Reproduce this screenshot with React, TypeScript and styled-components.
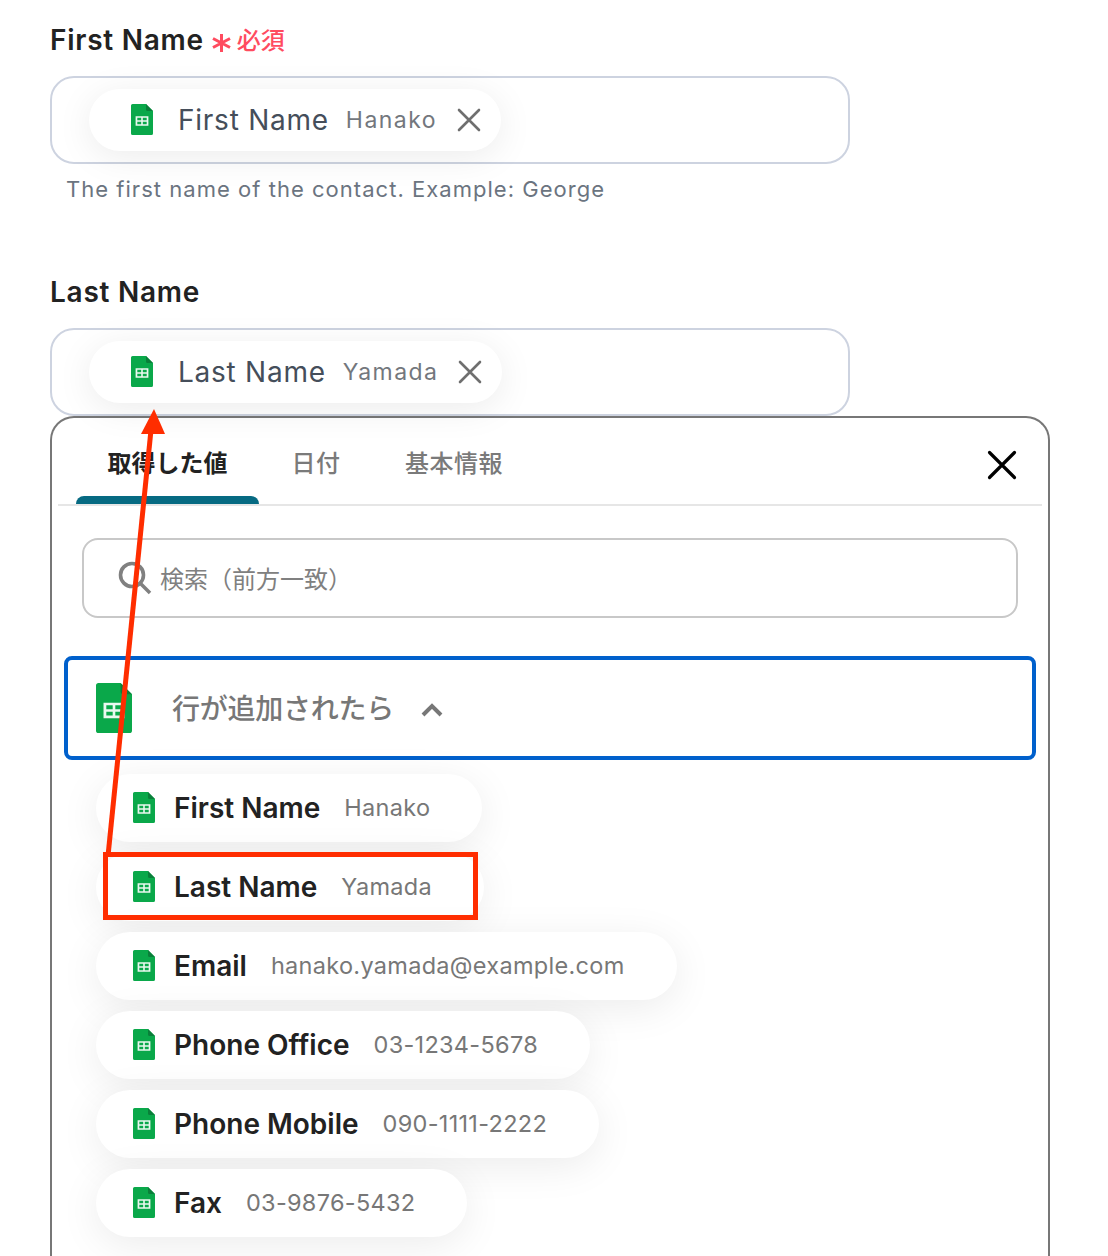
import React from "react";
import styled, { createGlobalStyle } from "styled-components";

const Global = createGlobalStyle`
  html, body { margin: 0; padding: 0; background: #fff; }
  body { font-family: Inter, "Noto Sans CJK JP", sans-serif; width: 1108px; height: 1256px; overflow: hidden; }
`;
const Page = styled.div`
  position: relative;
  width: 1108px;
  height: 1256px;
  overflow: hidden;
  padding: 21px 58px 0 50px;
  box-sizing: border-box;
`;
const Label = styled.div`
  display: flex;
  align-items: center;
  height: 38px;
  font-size: 28px;
  font-weight: 600;
  letter-spacing: 0.75px;
  color: #222222;
`;
const Asterisk = styled.svg`
  width: 19px;
  height: 18px;
  margin: 5px 6px 0 8px;
`;
const Required = styled.span`
  margin-top: -4px;
  font-size: 24px;
  font-weight: 500;
  letter-spacing: 0;
  color: #ff4b5f;
`;
const FieldBox = styled.div`
  box-sizing: border-box;
  width: 800px;
  height: 88px;
  margin-top: 17px;
  padding: 11px 0 0 37px;
  border: 2px solid #cdd3e0;
  border-radius: 24px;
`;
const FieldChip = styled.div`
  display: inline-flex;
  align-items: center;
  height: 62px;
  padding: 0 20px 0 42px;
  border-radius: 31px;
  background: #fff;
  box-shadow: 0 6px 36px rgba(0, 0, 0, 0.08);
`;
const FieldName = styled.span`
  margin-left: 25px;
  font-size: 28px;
  letter-spacing: 0.75px;
  color: #454e5a;
`;
const FieldValue = styled.span`
  margin-left: 17px;
  font-size: 23px;
  letter-spacing: 1.45px;
  color: #73777d;
`;
const ClearIcon = styled.svg`
  width: 24px;
  height: 24px;
  margin-left: 20px;
`;
const Help = styled.div`
  margin: 11px 0 0 16px;
  height: 29px;
  line-height: 29px;
  font-size: 22px;
  letter-spacing: 1.03px;
  color: #6b7480;
`;
const SecondLabel = styled(Label)`
  margin-top: 69px;
`;
const Panel = styled.div`
  box-sizing: border-box;
  width: 1000px;
  height: 900px;
  padding: 0 6px;
  border: 2px solid #777;
  border-bottom: 0;
  border-radius: 24px 24px 0 0;
  background: #fff;
`;
const TabBar = styled.div`
  display: flex;
  align-items: flex-end;
  height: 86px;
  border-bottom: 2px solid #e6e6e6;
  padding-left: 18px;
`;
const Tab = styled.div<{ $active?: boolean; $w: number }>`
  position: relative;
  box-sizing: border-box;
  width: ${(p) => p.$w}px;
  height: 86px;
  padding-top: 29px;
  text-align: center;
  font-size: 24px;
  line-height: 34px;
  font-weight: ${(p) => (p.$active ? 700 : 500)};
  letter-spacing: ${(p) => (p.$active ? "0" : "0.5px")};
  color: ${(p) => (p.$active ? "#222" : "#7a7a7a")};
  &::after {
    content: "";
    display: ${(p) => (p.$active ? "block" : "none")};
    position: absolute;
    left: 0;
    right: 0;
    bottom: 0;
    height: 8px;
    background: #066a82;
    border-radius: 8px 8px 0 0;
  }
`;
const TabClose = styled.svg`
  margin-left: auto;
  margin-right: 24px;
  align-self: flex-start;
  margin-top: 31px;
  width: 32px;
  height: 32px;
`;
const Search = styled.div`
  box-sizing: border-box;
  display: flex;
  align-items: center;
  width: 936px;
  height: 80px;
  margin: 32px 0 0 24px;
  padding-left: 34px;
  border: 2px solid #c8c8c8;
  border-radius: 16px;
  font-size: 24px;
  color: #808080;
`;
const SearchIcon = styled.svg`
  width: 34px;
  height: 34px;
  margin-right: 8px;
`;
const Placeholder = styled.span`
  margin-top: -2px;
`;
const Group = styled.div`
  box-sizing: border-box;
  display: flex;
  align-items: center;
  width: 972px;
  height: 104px;
  margin: 38px 0 0 6px;
  padding-left: 28px;
  border: 4px solid #0060cc;
  border-radius: 8px;
`;
const GroupTitle = styled.span`
  margin-top: -2px;
  margin-left: 40px;
  font-size: 28px;
  font-weight: 500;
  letter-spacing: -0.25px;
  color: #777;
`;
const Chevron = styled.svg`
  width: 24px;
  height: 16px;
  margin-left: 26px;
  margin-top: 3px;
`;
const List = styled.div`
  display: flex;
  flex-direction: column;
  align-items: flex-start;
  gap: 11px;
  margin: 14px 0 0 38px;
`;
const Chip = styled.div`
  display: inline-flex;
  align-items: center;
  height: 68px;
  padding: 0 52px 0 37px;
  border-radius: 34px;
  background: #fff;
  box-shadow: 0 8px 40px rgba(0, 0, 0, 0.08);
`;
const ChipName = styled.span`
  margin-left: 19px;
  font-size: 28px;
  font-weight: 600;
  color: #222;
`;
const ChipValue = styled.span`
  margin-top: -2px;
  margin-left: 24px;
  font-size: 23.5px;
  letter-spacing: 0.3px;
  color: #777;
`;
const Highlight = styled.div`
  position: absolute;
  box-sizing: border-box;
  left: 103px;
  top: 852px;
  width: 375px;
  height: 68px;
  border: 5px solid #ff2d00;
`;
const Arrow = styled.svg`
  position: absolute;
  left: 0;
  top: 0;
  width: 1108px;
  height: 1256px;
  pointer-events: none;
`;
const SheetIcon = styled.svg`
  flex: none;
  margin-top: -1px;
`;

const Sheet = ({ w = 22, h = 31 }: { w?: number; h?: number }) => (
  <SheetIcon width={w} height={h} viewBox="0 0 22 31" preserveAspectRatio="none">
    <path d="M1.6 0H15L22 7V29.4a1.6 1.6 0 0 1-1.6 1.6H1.6A1.6 1.6 0 0 1 0 29.4V1.6A1.6 1.6 0 0 1 1.6 0Z" fill="#0AA84A" />
    <path d="M15 0L22 7H16.5a1.5 1.5 0 0 1-1.5-1.5Z" fill="#0A7F3A" />
    <path d="M4.6 12.2H17.4V21.8H4.6ZM6.3 13.8V16.2H10.2V13.8ZM11.8 13.8V16.2H15.7V13.8ZM6.3 17.8V20.2H10.2V17.8ZM11.8 17.8V20.2H15.7V17.8Z" fill="#EAF8F0" fillRule="evenodd" />
  </SheetIcon>
);

const Cross = () => (
  <ClearIcon viewBox="0 0 24 24">
    <path d="M2 2L22 22M22 2L2 22" stroke="#6f6f6f" strokeWidth="2.6" strokeLinecap="round" />
  </ClearIcon>
);

const items = [
  ["First Name", "Hanako"],
  ["Last Name", "Yamada"],
  ["Email", "hanako.yamada@example.com"],
  ["Phone Office", "03-1234-5678"],
  ["Phone Mobile", "090-1111-2222"],
  ["Fax", "03-9876-5432"],
];

export default function App() {
  return (
    <Page>
      <Global />
      <Label>
        First Name
        <Asterisk viewBox="0 0 19 18">
          <path d="M9.5 0V18M1 4.5L18 13.5M18 4.5L1 13.5" stroke="#ff4b5f" strokeWidth="3" />
        </Asterisk>
        <Required>必須</Required>
      </Label>
      <FieldBox>
        <FieldChip>
          <Sheet />
          <FieldName>First Name</FieldName>
          <FieldValue>Hanako</FieldValue>
          <Cross />
        </FieldChip>
      </FieldBox>
      <Help>The first name of the contact. Example: George</Help>
      <SecondLabel>Last Name</SecondLabel>
      <FieldBox>
        <FieldChip>
          <Sheet />
          <FieldName>Last Name</FieldName>
          <FieldValue>Yamada</FieldValue>
          <Cross />
        </FieldChip>
      </FieldBox>
      <Panel>
        <TabBar>
          <Tab $active $w={183}>取得した値</Tab>
          <Tab $w={114}>日付</Tab>
          <Tab $w={162}>基本情報</Tab>
          <TabClose viewBox="0 0 32 32">
            <path d="M3.5 3.5L28.5 28.5M28.5 3.5L3.5 28.5" stroke="#000" strokeWidth="3.2" strokeLinecap="round" />
          </TabClose>
        </TabBar>
        <Search>
          <SearchIcon viewBox="0 0 34 34">
            <circle cx="14" cy="14" r="11.5" fill="none" stroke="#808080" strokeWidth="3.6" />
            <path d="M22 22L32 32" stroke="#808080" strokeWidth="3.6" />
          </SearchIcon>
          <Placeholder>検索（前方一致）</Placeholder>
        </Search>
        <Group>
          <Sheet w={36} h={50} />
          <GroupTitle>行が追加されたら</GroupTitle>
          <Chevron viewBox="0 0 24 16">
            <path d="M3 13L12 4L21 13" fill="none" stroke="#777" strokeWidth="4" />
          </Chevron>
        </Group>
        <List>
          {items.map(([name, value]) => (
            <Chip key={name}>
              <Sheet />
              <ChipName>{name}</ChipName>
              <ChipValue>{value}</ChipValue>
            </Chip>
          ))}
        </List>
      </Panel>
      <Highlight />
      <Arrow viewBox="0 0 1108 1256">
        <path d="M108 856L151 430" stroke="#ff2d00" strokeWidth="5" fill="none" />
        <path d="M154 409L165 434H141Z" fill="#ff2d00" />
      </Arrow>
    </Page>
  );
}
